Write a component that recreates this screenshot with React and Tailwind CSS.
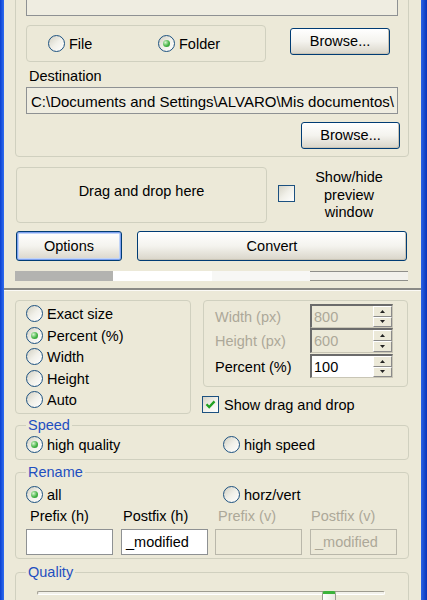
import React from "react";

function Radio({ checked, label, className = "" }) {
  return (
    <div className={"flex items-center " + className}>
      <span className="flex h-[17px] w-[17px] shrink-0 items-center justify-center rounded-full border border-[#1c5180] bg-linear-to-br from-[#d2d0c2] via-[#f1f0e9] to-white">
        {checked && (
          <span className="h-[7px] w-[7px] rounded-full bg-[radial-gradient(circle_at_35%_35%,#d8f5d0,#48b548_55%,#1f8a1f)]" />
        )}
      </span>
      <span className="ml-[4px] whitespace-nowrap pt-[2px]">{label}</span>
    </div>
  );
}

function Checkbox({ checked, className = "" }) {
  return (
    <span
      className={
        "flex h-[17px] w-[17px] shrink-0 items-center justify-center border border-[#1c5180] bg-linear-to-br from-[#d6d4c7] via-[#f1f0e9] to-white " +
        className
      }
    >
      {checked && (
        <svg width="11" height="11" viewBox="0 0 11 11">
          <path d="M1.5 5.2 L4.2 8 L9.5 2.4" stroke="#21a121" strokeWidth="2.3" fill="none" />
        </svg>
      )}
    </span>
  );
}

function Button({ children, className = "", focused }) {
  return (
    <div
      className={
        "flex shrink-0 items-center justify-center rounded-[3px] border border-[#003c74] bg-linear-to-b from-white via-[#f4f3ee] to-[#d9d5c9] " +
        (focused ? "shadow-[inset_0_0_0_1px_#7ea0ee,inset_0_0_0_2px_#c0d4f8] " : "shadow-[inset_-1px_-1px_0_#c9c4b6] ") +
        className
      }
    >
      {children}
    </div>
  );
}

function Arrow({ up }) {
  return (
    <svg width="5" height="3" viewBox="0 0 5 3">
      <path d={up ? "M0 3 L2.5 0 L5 3 Z" : "M0 0 L2.5 3 L5 0 Z"} fill="#222" />
    </svg>
  );
}

function Spin({ value, disabled }) {
  return (
    <div className="flex h-full w-[83px] border-t-2 border-l-2 border-t-[#6b6b6b] border-l-[#6b6b6b] border-b border-r border-b-[#c9c6b6] border-r-[#c9c6b6]">
      <div
        className={
          "flex flex-1 items-center pl-[2px] pt-[1px] " +
          (disabled ? "bg-[#ece9d8] text-[#aca899]" : "bg-white text-black")
        }
      >
        {value}
      </div>
      <div className="flex w-[19px] flex-col bg-[#ece9d8]">
        <div className="flex flex-1 items-center justify-center border-t border-l border-t-white border-l-white border-r border-b border-r-[#8a8a8a] border-b-[#8a8a8a]">
          <Arrow up />
        </div>
        <div className="flex flex-1 items-center justify-center border-t border-l border-t-white border-l-white border-r border-b border-r-[#8a8a8a] border-b-[#8a8a8a]">
          <Arrow />
        </div>
      </div>
    </div>
  );
}

export default function App() {
  return (
    <div className="flex h-[600px] w-[427px] overflow-hidden bg-[#ece9d8] font-['Liberation_Sans',Arial,sans-serif] text-[14.5px] leading-[17px] text-black">
      <div className="w-[4px] shrink-0 bg-linear-to-r from-[#0a3fd0] to-[#2f6cf0]" />

      <div className="w-[417px] shrink-0">
        {/* Source / destination group */}
        <div className="ml-[11px] mt-[-31px] h-[188px] w-[394px] rounded-[4px] border border-[#d0d0bf]">
          <div className="ml-[10px] mt-[15px] h-[31px] w-[372px] border border-[#8e9193] bg-[#efede1]" />
          <div className="mt-[9px] flex items-start">
            <div className="ml-[10px] flex h-[37px] w-[240px] items-center rounded-[4px] border border-[#d0d0bf] pl-[21px]">
              <Radio label="File" className="w-[110px]" />
              <Radio checked label="Folder" />
            </div>
            <Button className="ml-[24px] mt-[3px] h-[27px] w-[100px]">Browse...</Button>
          </div>
          <div className="ml-[13px] mt-[4px] h-[17px] pt-[2px]">Destination</div>
          <div className="ml-[10px] mt-[4px] flex h-[27px] w-[372px] items-center overflow-hidden whitespace-nowrap border border-[#8e9193] bg-[#efede1] pl-[4px] pt-[1px] text-[15px]">
            {"C:\\Documents and Settings\\ALVARO\\Mis documentos\\"}
          </div>
          <Button className="ml-[285px] mt-[8px] h-[27px] w-[99px]">Browse...</Button>
        </div>

        {/* Drag and drop */}
        <div className="mt-[10px] flex items-start">
          <div className="ml-[12px] flex h-[56px] w-[251px] items-center justify-center rounded-[4px] border border-[#d0d0bf] pb-[8px]">
            Drag and drop here
          </div>
          <Checkbox className="ml-[11px] mt-[18px]" />
          <div className="ml-[4px] mt-[2px] w-[100px] text-center leading-[17.5px]">
            Show/hide
            <br />
            preview
            <br />
            window
          </div>
        </div>

        {/* Buttons */}
        <div className="mt-[8px] flex">
          <Button focused className="ml-[12px] h-[30px] w-[106px] pt-[1px]">
            Options
          </Button>
          <Button className="ml-[15px] h-[30px] w-[270px] pt-[1px]">Convert</Button>
        </div>

        {/* Progress */}
        <div className="ml-[11px] mt-[10px] flex h-[10px] w-[393px]">
          <div className="w-[98px] bg-[#b3b3b0]" />
          <div className="w-[99px] bg-white" />
          <div className="w-[98px] bg-[#f7f7f5]" />
          <div className="flex-1 border-y border-[#8f8f8a] bg-[#f2f1ec]" />
        </div>

        {/* Splitter */}
        <div className="mt-[7px] h-[2px] bg-[#8a8a86]" />
        <div className="h-[1px] bg-[#fbfaf6]" />

        {/* Size options */}
        <div className="mt-[9px] flex items-start">
          <div className="ml-[11px] h-[114px] w-[176px] rounded-[4px] border border-[#d0d0bf] pt-[2px]">
            <Radio label="Exact size" className="ml-[10px] h-[21.5px]" />
            <Radio checked label="Percent (%)" className="ml-[10px] h-[21.5px]" />
            <Radio label="Width" className="ml-[10px] h-[21.5px]" />
            <Radio label="Height" className="ml-[10px] h-[21.5px]" />
            <Radio label="Auto" className="ml-[10px] h-[21.5px]" />
          </div>
          <div className="ml-[12px] w-[205px]">
            <div className="h-[87px] rounded-[4px] border border-[#d0d0bf]">
              <div className="mt-[3px] flex h-[24px] items-center">
                <span className="w-[106px] pl-[11px] pt-[2px] text-[#aca899]">Width (px)</span>
                <Spin value="800" disabled />
              </div>
              <div className="flex h-[25px] items-center">
                <span className="w-[106px] pl-[11px] pt-[2px] text-[#aca899]">Height (px)</span>
                <Spin value="600" disabled />
              </div>
              <div className="mt-[1px] flex h-[24px] items-center">
                <span className="w-[106px] pl-[11px] pt-[2px]">Percent (%)</span>
                <Spin value="100" />
              </div>
            </div>
            <div className="ml-[-1px] mt-[9px] flex h-[17px] items-center">
              <Checkbox checked />
              <span className="ml-[5px] pt-[2px]">Show drag and drop</span>
            </div>
          </div>
        </div>

        {/* Speed */}
        <fieldset className="ml-[11px] mt-[2px] h-[44px] w-[394px] rounded-[4px] border border-[#d0d0bf]">
          <legend className="ml-[10px] px-[2px] pt-[1px] leading-[17px] text-[#1f4fc0]">Speed</legend>
          <div className="flex h-[21px] items-center">
            <Radio checked label="high quality" className="ml-[10px] w-[197px]" />
            <Radio label="high speed" />
          </div>
        </fieldset>

        {/* Rename */}
        <fieldset className="ml-[11px] mt-[3px] h-[96px] w-[394px] rounded-[4px] border border-[#d0d0bf]">
          <legend className="ml-[10px] px-[2px] pt-[1px] leading-[17px] text-[#1f4fc0]">Rename</legend>
          <div className="mt-[3px] flex h-[21px] items-center">
            <Radio checked label="all" className="ml-[10px] w-[197px]" />
            <Radio label="horz/vert" />
          </div>
          <div className="mt-[2px] flex h-[17px] items-center whitespace-nowrap pt-[2px]">
            <span className="ml-[10px] w-[87px] pl-[4px]">Prefix (h)</span>
            <span className="ml-[8px] w-[87px] pl-[2px]">Postfix (h)</span>
            <span className="ml-[7px] w-[87px] pl-[3px] text-[#aca899]">Prefix (v)</span>
            <span className="ml-[8px] w-[87px] pl-[1px] text-[#aca899]">Postfix (v)</span>
          </div>
          <div className="mt-[5px] flex h-[26px]">
            <div className="ml-[10px] w-[87px] border border-[#8e9193] bg-white" />
            <div className="ml-[8px] flex w-[87px] items-center border border-[#8e9193] bg-white pl-[4px] pt-[1px]">
              _modified
            </div>
            <div className="ml-[7px] w-[87px] border border-[#b9b7aa] bg-[#ece9d8]" />
            <div className="ml-[8px] flex w-[87px] items-center border border-[#b9b7aa] bg-[#ece9d8] pl-[4px] pt-[1px] text-[#aca899]">
              _modified
            </div>
          </div>
        </fieldset>

        {/* Quality */}
        <fieldset className="ml-[11px] mt-[4px] h-[80px] w-[394px] rounded-[4px] border border-[#d0d0bf]">
          <legend className="ml-[10px] px-[2px] pt-[1px] leading-[17px] text-[#1f4fc0]">Quality</legend>
          <div className="relative ml-[21px] mt-[1px] h-[30px] w-[348px]">
            <div className="mt-[10px] h-[4px] rounded-[2px] border border-t-[#9d9b8f] border-l-[#9d9b8f] border-b-white border-r-white bg-[#f2f1ea]" />
            <div className="absolute left-[285px] top-0 h-[24px] w-[14px] rounded-t-[3px] border border-[#9a9a90] border-t-[3px] border-t-[#3bb33b] bg-linear-to-r from-white to-[#e9e8e0]" />
          </div>
        </fieldset>
      </div>

      <div className="w-[6px] shrink-0 bg-linear-to-r from-[#2a62e6] to-[#0a33b8]" />
    </div>
  );
}
